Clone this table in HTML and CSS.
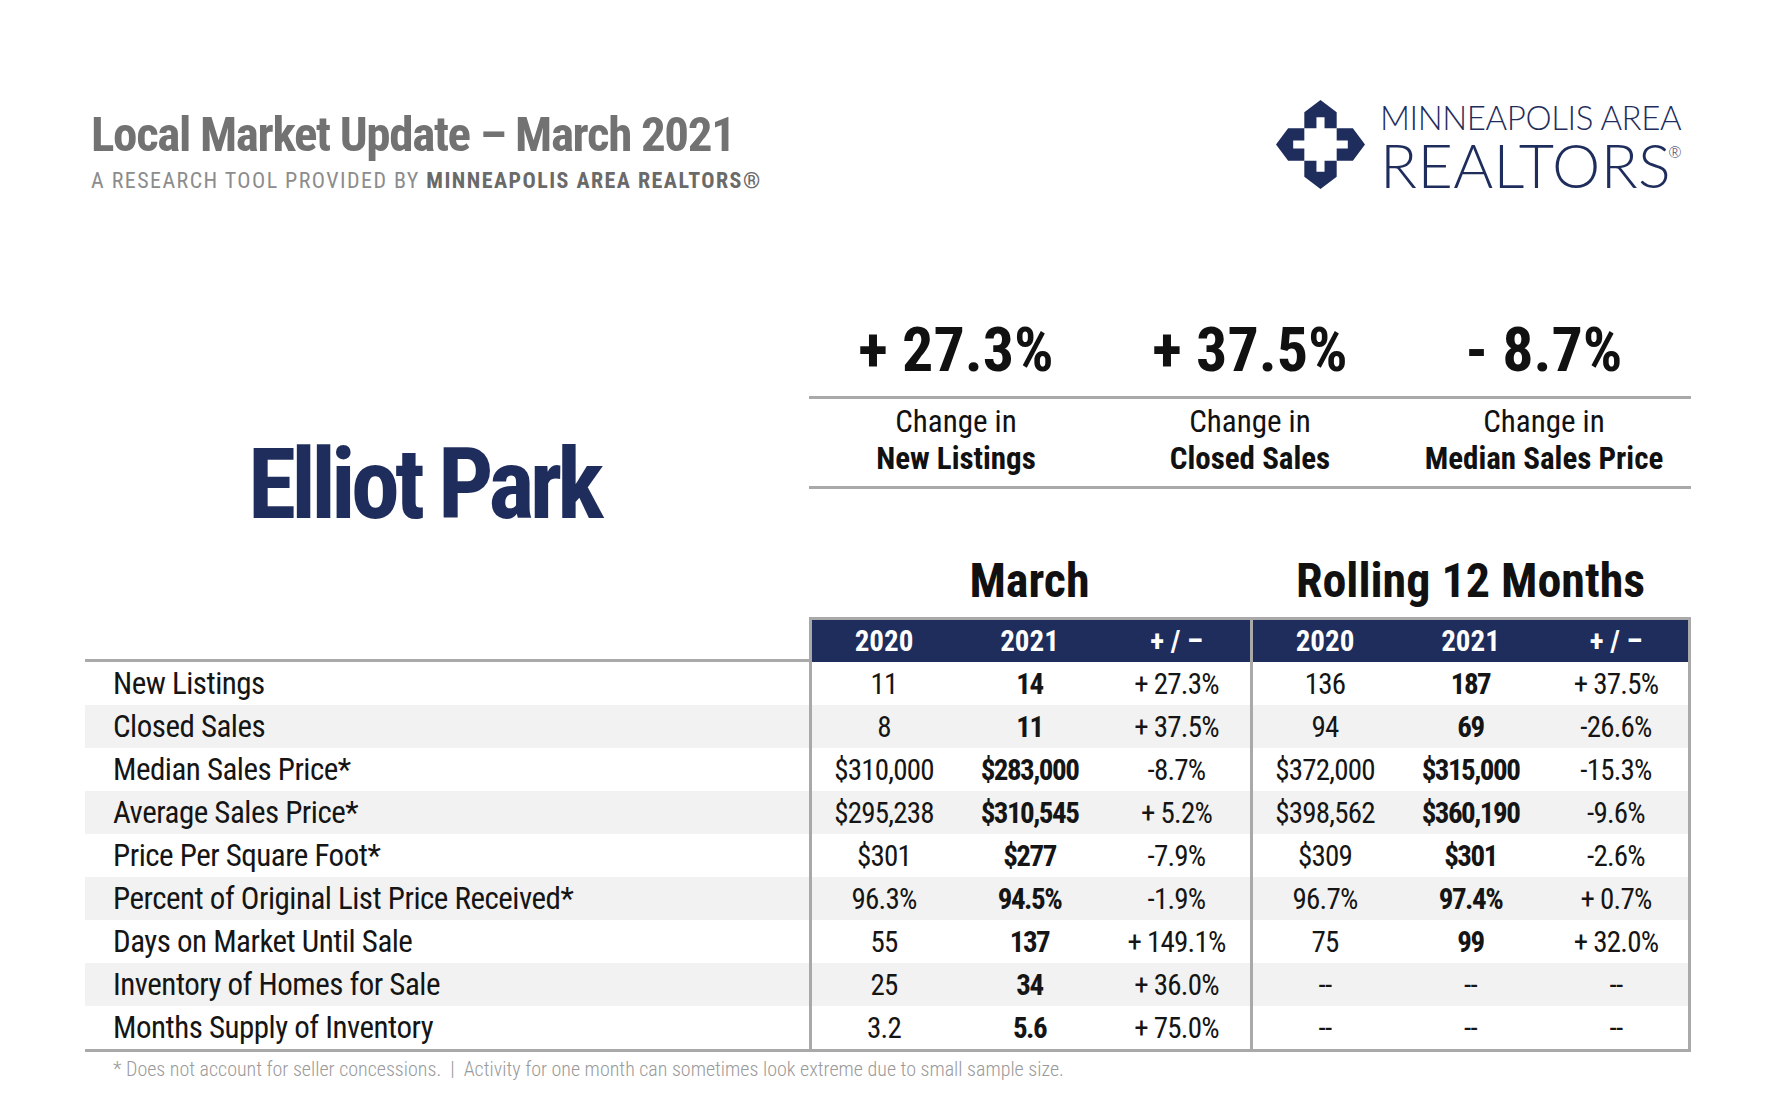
FILE: index.html
```html
<!DOCTYPE html>
<html lang="en">
<head>
<meta charset="utf-8">
<title>Local Market Update – March 2021 – Elliot Park</title>
<link rel="stylesheet" href="styles.css">
</head>
<body>
<div class="page">
  <header class="top">
    <div class="titles">
      <h1 class="title">Local Market Update – March 2021</h1>
      <div class="subtitle">A RESEARCH TOOL PROVIDED BY <b>MINNEAPOLIS AREA REALTORS®</b></div>
    </div>
    <div class="logo">
      <svg class="logo-mark" viewBox="0 0 88 88" aria-hidden="true">
        <path d="M28 28 V12 L44 0 L60 12 V28 H48 V17 H40 V28 Z"/>
        <path d="M28 28 H12 L0 44 L12 60 H28 V48 H17 V40 H28 Z"/>
        <path d="M60 28 H76 L88 44 L76 60 H60 V48 H71 V40 H60 Z"/>
        <path d="M28 60 V76 L44 88 L60 76 V60 H48 V71 H40 V60 Z"/>
      </svg>
      <div class="logo-text">
        <div class="logo-line1">MINNEAPOLIS AREA</div>
        <div class="logo-line2">REALTORS<span class="reg">®</span></div>
      </div>
    </div>
  </header>

  <section class="summary">
    <div class="area">Elliot Park</div>
    <div class="kpis">
      <div class="kpi-values">
        <div>+ 27.3%</div>
        <div>+ 37.5%</div>
        <div>- 8.7%</div>
      </div>
      <div class="kpi-labels">
        <div>Change in<br><b>New Listings</b></div>
        <div>Change in<br><b>Closed Sales</b></div>
        <div>Change in<br><b>Median Sales Price</b></div>
      </div>
    </div>
  </section>

  <div class="group-heads">
    <div>March</div>
    <div>Rolling 12 Months</div>
  </div>

  <table class="data">
    <colgroup>
      <col class="c-label">
      <col class="c-num"><col class="c-num"><col class="c-num">
      <col class="c-num"><col class="c-num"><col class="c-num">
    </colgroup>
    <thead>
      <tr>
        <th class="blank"></th>
        <th class="h gstart">2020</th><th class="h">2021</th><th class="h">+ / –</th>
        <th class="h gstart">2020</th><th class="h">2021</th><th class="h gend">+ / –</th>
      </tr>
    </thead>
    <tbody>
      <tr><td class="label">New Listings</td><td class="gstart">11</td><td class="b">14</td><td>+ 27.3%</td><td class="gstart">136</td><td class="b">187</td><td class="gend">+ 37.5%</td></tr>
      <tr><td class="label">Closed Sales</td><td class="gstart">8</td><td class="b">11</td><td>+ 37.5%</td><td class="gstart">94</td><td class="b">69</td><td class="gend">-26.6%</td></tr>
      <tr><td class="label">Median Sales Price*</td><td class="gstart">$310,000</td><td class="b">$283,000</td><td>-8.7%</td><td class="gstart">$372,000</td><td class="b">$315,000</td><td class="gend">-15.3%</td></tr>
      <tr><td class="label">Average Sales Price*</td><td class="gstart">$295,238</td><td class="b">$310,545</td><td>+ 5.2%</td><td class="gstart">$398,562</td><td class="b">$360,190</td><td class="gend">-9.6%</td></tr>
      <tr><td class="label">Price Per Square Foot*</td><td class="gstart">$301</td><td class="b">$277</td><td>-7.9%</td><td class="gstart">$309</td><td class="b">$301</td><td class="gend">-2.6%</td></tr>
      <tr><td class="label">Percent of Original List Price Received*</td><td class="gstart">96.3%</td><td class="b">94.5%</td><td>-1.9%</td><td class="gstart">96.7%</td><td class="b">97.4%</td><td class="gend">+ 0.7%</td></tr>
      <tr><td class="label">Days on Market Until Sale</td><td class="gstart">55</td><td class="b">137</td><td>+ 149.1%</td><td class="gstart">75</td><td class="b">99</td><td class="gend">+ 32.0%</td></tr>
      <tr><td class="label">Inventory of Homes for Sale</td><td class="gstart">25</td><td class="b">34</td><td>+ 36.0%</td><td class="gstart">--</td><td>--</td><td class="gend">--</td></tr>
      <tr><td class="label">Months Supply of Inventory</td><td class="gstart">3.2</td><td class="b">5.6</td><td>+ 75.0%</td><td class="gstart">--</td><td>--</td><td class="gend">--</td></tr>
    </tbody>
  </table>

  <p class="footnote">* Does not account for seller concessions.&nbsp; |&nbsp; Activity for one month can sometimes look extreme due to small sample size.</p>
</div>
</body>
</html>
```
FILE: styles.css
```css
:root {
  --cond: "Liberation Sans Narrow", "Arial Narrow", "Roboto Condensed", "DejaVu Sans Condensed", sans-serif;
  --navy: #1f2d5c;
  --rule: #a9a9a9;
}

* { box-sizing: border-box; }

body {
  margin: 0;
  background: #ffffff;
  font-family: var(--cond);
  color: #111111;
}

.page {
  width: 1777px;
  padding: 0 86px 0 85px;
}

/* ---------- header ---------- */
.top {
  display: flex;
  justify-content: space-between;
  align-items: flex-start;
  padding-top: 100px;
}

.titles {
  padding-left: 6px;
  padding-top: 7px;
}

.title {
  margin: 0;
  font-size: 49px;
  line-height: 56px;
  font-weight: 700;
  color: #727272;
  letter-spacing: -1.35px;
}

.subtitle {
  margin-top: 6px;
  font-size: 22px;
  line-height: 24px;
  color: #8c8c8c;
  letter-spacing: 1.45px;
}

.subtitle b {
  color: #6a6a6a;
}

.logo {
  display: flex;
  align-items: flex-start;
  gap: 15px;
  margin-right: 9px;
}

.logo-mark {
  width: 89px;
  height: 89px;
  fill: var(--navy);
}

.logo-text {
  color: var(--navy);
  font-family: Lato, "Open Sans", sans-serif;
  font-weight: 300;
  margin-top: 1px;
}

.logo-line1 {
  font-size: 33px;
  line-height: 33px;
  letter-spacing: -0.4px;
}

.logo-line2 {
  font-size: 61px;
  line-height: 56px;
  margin-top: 3px;
  letter-spacing: 0.4px;
}

.reg {
  font-size: 16px;
  line-height: 0;
  vertical-align: 30px;
  margin-left: -3px;
}

/* ---------- summary ---------- */
.summary {
  display: flex;
  margin-top: 122px;
}

.area {
  width: 724px;
  padding-left: 163px;
  padding-top: 116px;
  font-size: 98px;
  line-height: 108px;
  font-weight: 700;
  color: var(--navy);
  letter-spacing: -4.8px;
}

.kpis {
  width: 882px;
}

.kpi-values,
.kpi-labels {
  display: grid;
  grid-template-columns: repeat(3, 1fr);
  text-align: center;
  border-bottom: 3px solid var(--rule);
}

.kpi-values {
  font-size: 62px;
  line-height: 70px;
  font-weight: 700;
  color: #111;
  padding-bottom: 11px;
}

.kpi-labels {
  font-size: 31px;
  line-height: 37px;
  padding: 4px 0 9px;
}

/* ---------- table ---------- */
.group-heads {
  display: flex;
  padding-left: 724px;
  margin-top: 15px;
}

.group-heads div {
  width: 441px;
  text-align: center;
  font-size: 48px;
  line-height: 54px;
  font-weight: 700;
}

.data {
  width: 1606px;
  margin-top: 9px;
  border-collapse: separate;
  border-spacing: 0;
  table-layout: fixed;
}

.c-label { width: 724px; }
.c-num { width: 147px; }

.data th {
  padding: 0;
}

.data th.blank {
  border-bottom: 3px solid var(--rule);
  height: 45px;
}

.data th.h {
  height: 45px;
  background: var(--navy);
  color: #ffffff;
  border-top: 3px solid var(--rule);
  font-size: 29px;
  font-weight: 700;
  text-align: center;
}

.data td {
  height: 43px;
  padding: 0;
  font-size: 29px;
  text-align: center;
  color: #151515;
  letter-spacing: -0.8px;
}

.data tbody tr:nth-child(even) td {
  background: #f2f2f2;
}

.data tbody tr:last-child td {
  border-bottom: 3px solid var(--rule);
  height: 46px;
}

.data td.label {
  text-align: left;
  padding-left: 28px;
  font-size: 31px;
  letter-spacing: -0.5px;
}

.data td.b {
  font-weight: 700;
  letter-spacing: -1.5px;
}

.data .gstart {
  border-left: 3px solid var(--rule);
}

.data .gend {
  border-right: 3px solid var(--rule);
}

.footnote {
  margin: 6px 0 0 28px;
  font-size: 20px;
  font-weight: 300;
  line-height: 22px;
  color: #9a9a9a;
}
```
